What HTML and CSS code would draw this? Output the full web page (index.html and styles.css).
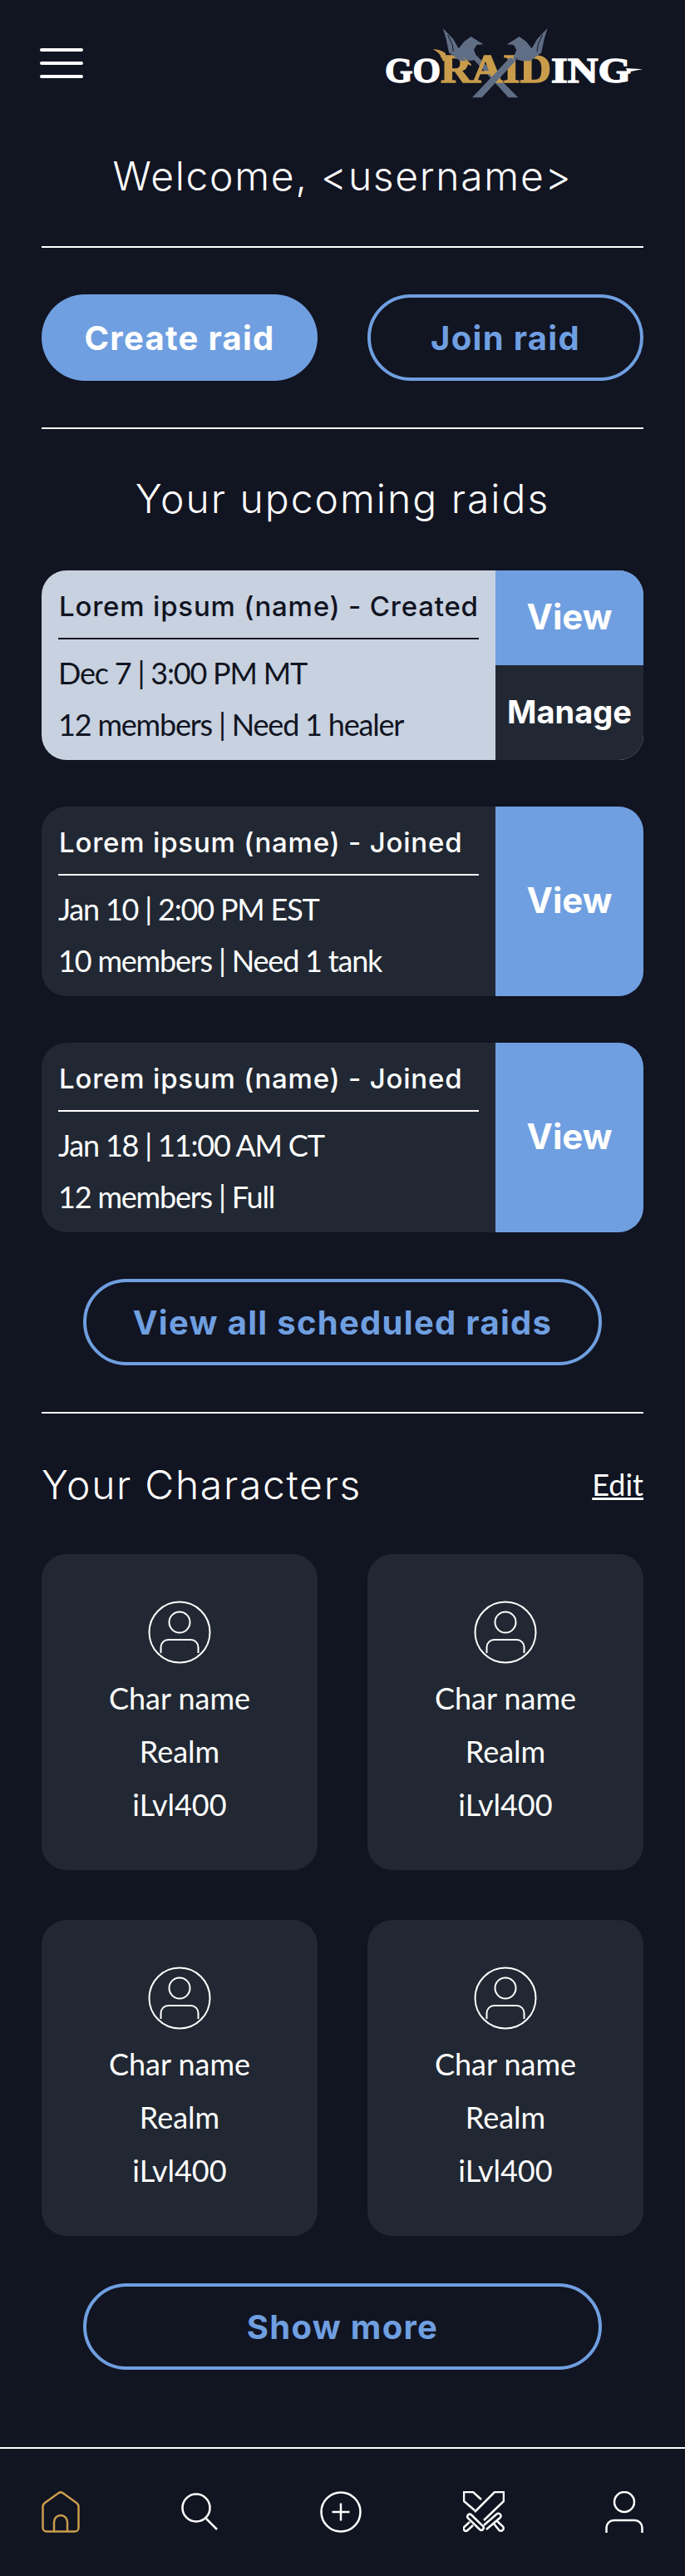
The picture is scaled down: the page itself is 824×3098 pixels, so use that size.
FILE: index.html
```html
<!DOCTYPE html>
<html lang="en">
<head>
    <meta charset="UTF-8">
    <meta name="viewport" content="width=device-width, initial-scale=1.0">
    <title>goRaiding</title>
    <link rel="stylesheet" href="styles.css">
</head>
<body>
    <header class="top-bar">
        <div class="burger"><span></span><span></span><span></span></div>
        <svg class="logo" width="312" height="86" viewBox="0 0 312 86">
            <!-- left axe sits behind the lettering, its head is repeated on top -->
            <g transform="translate(57 -3) scale(.3333)">
                <path class="logo-axe" d="M160 110 L310 262 L275 262 L145 120z"/>
            </g>
            <text class="logo-white" x="0" y="66" textLength="67" lengthAdjust="spacingAndGlyphs">GO</text>
            <text class="logo-gold" x="67" y="66" textLength="133" lengthAdjust="spacingAndGlyphs">RAID</text>
            <text class="logo-white" x="200" y="66" textLength="96" lengthAdjust="spacingAndGlyphs">ING</text>
            <g transform="translate(57 -3) scale(.3333)">
                <path class="logo-gold-fill" d="M2 88 Q30 88 48 102 L48 130 L38 130 Q32 102 2 88z"/>
                <path class="logo-white-fill" d="M699 156 L759 160 L704 170z"/>
                <path class="logo-axe" d="M38 12 L75 50 L95 85 L115 60 L140 42 L160 55 L185 70 L160 72 L150 90 L165 125 L130 130 L100 130 L60 100 L50 50z"/>
                <path class="logo-gold-fill" d="M105 112 L138 138 L142 148 L112 136 L122 128z"/>
                <path class="logo-slit" d="M56 36 L72 70 L76 96"/>
                <!-- right axe crosses over the lettering -->
                <path class="logo-axe" d="M416 12 L379 50 L359 85 L339 60 L314 42 L294 55 L269 70 L294 72 L304 90 L289 125 L309 120 L179 262 L144 262 L280 118 L324 130 L354 130 L394 100 L404 50z"/>
                <path class="logo-slit" d="M398 36 L382 70 L378 96"/>
            </g>
        </svg>
    </header>

    <main class="page">
        <h1 class="welcome">Welcome, &lt;username&gt;</h1>
        <hr>
        <div class="two-col action-row">
            <a href="#" class="btn btn-solid">Create raid</a>
            <a href="#" class="btn btn-outline">Join raid</a>
        </div>
        <hr>
        <h2 class="section-title center">Your upcoming raids</h2>

        <div class="raid-card light">
            <div class="raid-info">
                <div class="raid-name">Lorem ipsum (name) - Created</div>
                <div class="raid-line">Dec 7 | 3:00 PM MT</div>
                <div class="raid-line">12 members | Need 1 healer</div>
            </div>
            <div class="raid-actions">
                <a href="#" class="raid-view">View</a>
                <a href="#" class="raid-manage">Manage</a>
            </div>
        </div>

        <div class="raid-card">
            <div class="raid-info">
                <div class="raid-name">Lorem ipsum (name) - Joined</div>
                <div class="raid-line">Jan 10 | 2:00 PM EST</div>
                <div class="raid-line">10 members | Need 1 tank</div>
            </div>
            <div class="raid-actions">
                <a href="#" class="raid-view">View</a>
            </div>
        </div>

        <div class="raid-card">
            <div class="raid-info">
                <div class="raid-name">Lorem ipsum (name) - Joined</div>
                <div class="raid-line">Jan 18 | 11:00 AM CT</div>
                <div class="raid-line">12 members | Full</div>
            </div>
            <div class="raid-actions">
                <a href="#" class="raid-view">View</a>
            </div>
        </div>

        <a href="#" class="btn btn-outline btn-wide view-all">View all scheduled raids</a>
        <hr>

        <div class="chars-head">
            <h2 class="section-title">Your Characters</h2>
            <a href="#" class="edit-link">Edit</a>
        </div>

        <div class="two-col char-grid">
            <div class="char-card">
                <svg class="avatar" width="76" height="76" viewBox="0 0 76 76"><circle cx="38" cy="38" r="36.5"/><circle cx="38" cy="26" r="12.5"/><path d="M15.500 63 V56 a9 9 0 0 1 9-9 h27 a9 9 0 0 1 9 9 V63"/></svg>
                <div>Char name</div><div>Realm</div><div>iLvl400</div>
            </div>
            <div class="char-card">
                <svg class="avatar" width="76" height="76" viewBox="0 0 76 76"><circle cx="38" cy="38" r="36.5"/><circle cx="38" cy="26" r="12.5"/><path d="M15.500 63 V56 a9 9 0 0 1 9-9 h27 a9 9 0 0 1 9 9 V63"/></svg>
                <div>Char name</div><div>Realm</div><div>iLvl400</div>
            </div>
            <div class="char-card">
                <svg class="avatar" width="76" height="76" viewBox="0 0 76 76"><circle cx="38" cy="38" r="36.5"/><circle cx="38" cy="26" r="12.5"/><path d="M15.500 63 V56 a9 9 0 0 1 9-9 h27 a9 9 0 0 1 9 9 V63"/></svg>
                <div>Char name</div><div>Realm</div><div>iLvl400</div>
            </div>
            <div class="char-card">
                <svg class="avatar" width="76" height="76" viewBox="0 0 76 76"><circle cx="38" cy="38" r="36.5"/><circle cx="38" cy="26" r="12.5"/><path d="M15.500 63 V56 a9 9 0 0 1 9-9 h27 a9 9 0 0 1 9 9 V63"/></svg>
                <div>Char name</div><div>Realm</div><div>iLvl400</div>
            </div>
        </div>

        <a href="#" class="btn btn-outline btn-wide show-more">Show more</a>
    </main>

    <nav class="bottom-nav">
        <svg class="nav-home" width="46" height="50" viewBox="0 0 46 50"><path d="M4 14 L20 2.500 a5 5 0 0 1 6 0 L42 14 a6 6 0 0 1 2.500 5 V44 a4.500 4.500 0 0 1-4.500 4.500 H6 a4.500 4.500 0 0 1-4.500-4.500 V19 a6 6 0 0 1 2.500-5z"/><path d="M15 48 V37 a8 8 0 0 1 16 0 V48"/></svg>
        <svg width="46" height="50" viewBox="0 0 46 50"><circle cx="18" cy="20" r="16.500"/><path d="M30 33 L43 46"/></svg>
        <svg width="50" height="50" viewBox="0 0 50 50"><circle cx="25" cy="25" r="23.500"/><path d="M25 14.500 V35.500 M14.500 25 H35.500"/></svg>
        <svg width="50" height="50" viewBox="0 0 50 50"><path d="M14 25 L38 1 H49 V12 L25 35"/><path d="M14 23 L1 12 V1 H12 L22 10"/><path d="M6 28.500 a3 3 0 0 1 4 0 L24 42 a3 3 0 0 1 0 4 a3 3 0 0 1-4 0 L6 32.500 a3 3 0 0 1 0-4z"/><path d="M8 37 L1.500 43 a2.500 2.500 0 0 0 4 4 L12 41"/><path d="M28 46 L44.500 32 a3 3 0 0 0-4-4.500 L25 41"/><path d="M37 39 L43 46.500 a2.500 2.500 0 0 0 5-4 L41 36"/></svg>
        <svg width="46" height="50" viewBox="0 0 46 50"><circle cx="23" cy="13" r="12"/><path d="M1.500 50 V44 a9 9 0 0 1 9-9 h25 a9 9 0 0 1 9 9 V50"/></svg>
    </nav>
</body>
</html>
```

FILE: styles.css
```css
body {
    margin: 0;
    padding: 0;
    background-color: #111421;
    color: #fff;
    font-family: 'Lato', sans-serif;
    height: 3098px;
    overflow: hidden;
}

a {
    text-decoration: none;
}

hr {
    margin: 0;
    border: 0;
    border-top: 2px solid #fff;
}

.top-bar {
    display: flex;
    justify-content: space-between;
    padding: 33px 49px 0 48px;
    height: 92px;
}

.burger {
    display: flex;
    flex-direction: column;
    gap: 12px;
    width: 52px;
    padding-top: 25px;
}

.burger span {
    display: block;
    height: 4px;
    border-radius: 2px;
    background-color: #fff;
}

.logo-white {
    font: bold 42px 'Liberation Serif', serif;
    fill: #fff;
    stroke: #fff;
    stroke-width: 1.4;
}

.logo-gold {
    font: bold 48px 'Liberation Serif', serif;
    fill: #c99c4c;
    stroke: #c99c4c;
    stroke-width: 1.4;
}

.page {
    padding: 0 50px;
}

.welcome {
    margin: 0;
    height: 171px;
    line-height: 174px;
    font-family: 'Inter', sans-serif;
    font-weight: 300;
    font-size: 48px;
    letter-spacing: 1.7px;
    text-align: center;
}

.two-col {
    display: grid;
    grid-template-columns: 332px 332px;
    column-gap: 60px;
}

.action-row {
    padding: 56px 0;
}

.btn {
    display: flex;
    align-items: center;
    justify-content: center;
    box-sizing: border-box;
    height: 104px;
    border-radius: 52px;
    font-family: 'Inter', sans-serif;
    font-weight: 700;
    font-size: 40px;
    letter-spacing: 1.3px;
}

.btn-solid {
    background-color: #6f9fe0;
    color: #fff;
}

.btn-outline {
    border: 4px solid #6f9fe0;
    color: #6f9fe0;
}

.btn-wide {
    width: 624px;
    margin: 0 auto;
}

.section-title {
    margin: 0;
    font-family: 'Inter', sans-serif;
    font-weight: 300;
    font-size: 48px;
    letter-spacing: 1.7px;
    line-height: 60px;
}

.center {
    letter-spacing: 2px;
    text-align: center;
    padding: 54px 0 56px;
}

.raid-card {
    display: flex;
    height: 228px;
    margin-bottom: 56px;
    border-radius: 30px;
    overflow: hidden;
    background-color: #212833;
}

.raid-info {
    width: 546px;
    box-sizing: border-box;
    padding: 20px 20px 0;
}

.raid-name {
    height: 61px;
    line-height: 46px;
    padding-left: 1px;
    border-bottom: 2px solid #fff;
    font-family: 'Inter', sans-serif;
    font-weight: 500;
    font-size: 33px;
    letter-spacing: 0.8px;
    margin-bottom: 9px;
}

.raid-line {
    font-size: 36px;
    letter-spacing: -1.2px;
    line-height: 62px;
}

.raid-actions {
    display: flex;
    flex-direction: column;
    flex: 1;
}

.raid-view {
    flex: 1;
    display: flex;
    align-items: center;
    justify-content: center;
    padding-bottom: 3px;
    background-color: #6f9fe0;
    color: #fff;
    font-family: 'Inter', sans-serif;
    font-weight: 700;
    font-size: 42px;
}

.raid-manage {
    flex: 1;
    display: flex;
    align-items: center;
    justify-content: center;
    padding-bottom: 3px;
    color: #fff;
    font-family: 'Inter', sans-serif;
    font-weight: 700;
    font-size: 38px;
}

.light {
    background-color: #c7d1e0;
    color: #111421;
}

.light .raid-name {
    border-bottom-color: #111421;
}

.light .raid-manage {
    background-color: #212833;
}

.view-all {
    margin-bottom: 56px;
}

.chars-head {
    display: flex;
    justify-content: space-between;
    align-items: center;
    padding: 56px 0 53px;
}

.edit-link {
    padding-bottom: 3px;
    color: #fff;
    text-decoration: underline;
    font-size: 36px;
}

.char-grid {
    row-gap: 60px;
}

.char-card {
    height: 380px;
    box-sizing: border-box;
    padding-top: 56px;
    border-radius: 30px;
    background-color: #212833;
    text-align: center;
    font-size: 36px;
    line-height: 64px;
}

.avatar {
    display: block;
    margin: 0 auto 9px;
}

svg circle,
svg path {
    fill: none;
    stroke: #fff;
    stroke-width: 2.500;
}

.logo path {
    stroke: none;
}

.logo path.logo-gold-fill {
    fill: #c99c4c;
}

.logo path.logo-white-fill {
    fill: #fff;
}

.logo path.logo-axe {
    fill: #5f6e84;
}

.logo path.logo-slit {
    stroke: #111421;
    stroke-width: 3;
}

.avatar circle,
.avatar path {
    stroke-width: 2;
}

.show-more {
    margin-top: 57px;
}

.bottom-nav {
    display: flex;
    justify-content: space-between;
    margin-top: 93px;
    padding: 51px 50px 0;
    border-top: 2px solid #fff;
}

.nav-home path {
    stroke: #c99c4c;
}
```
